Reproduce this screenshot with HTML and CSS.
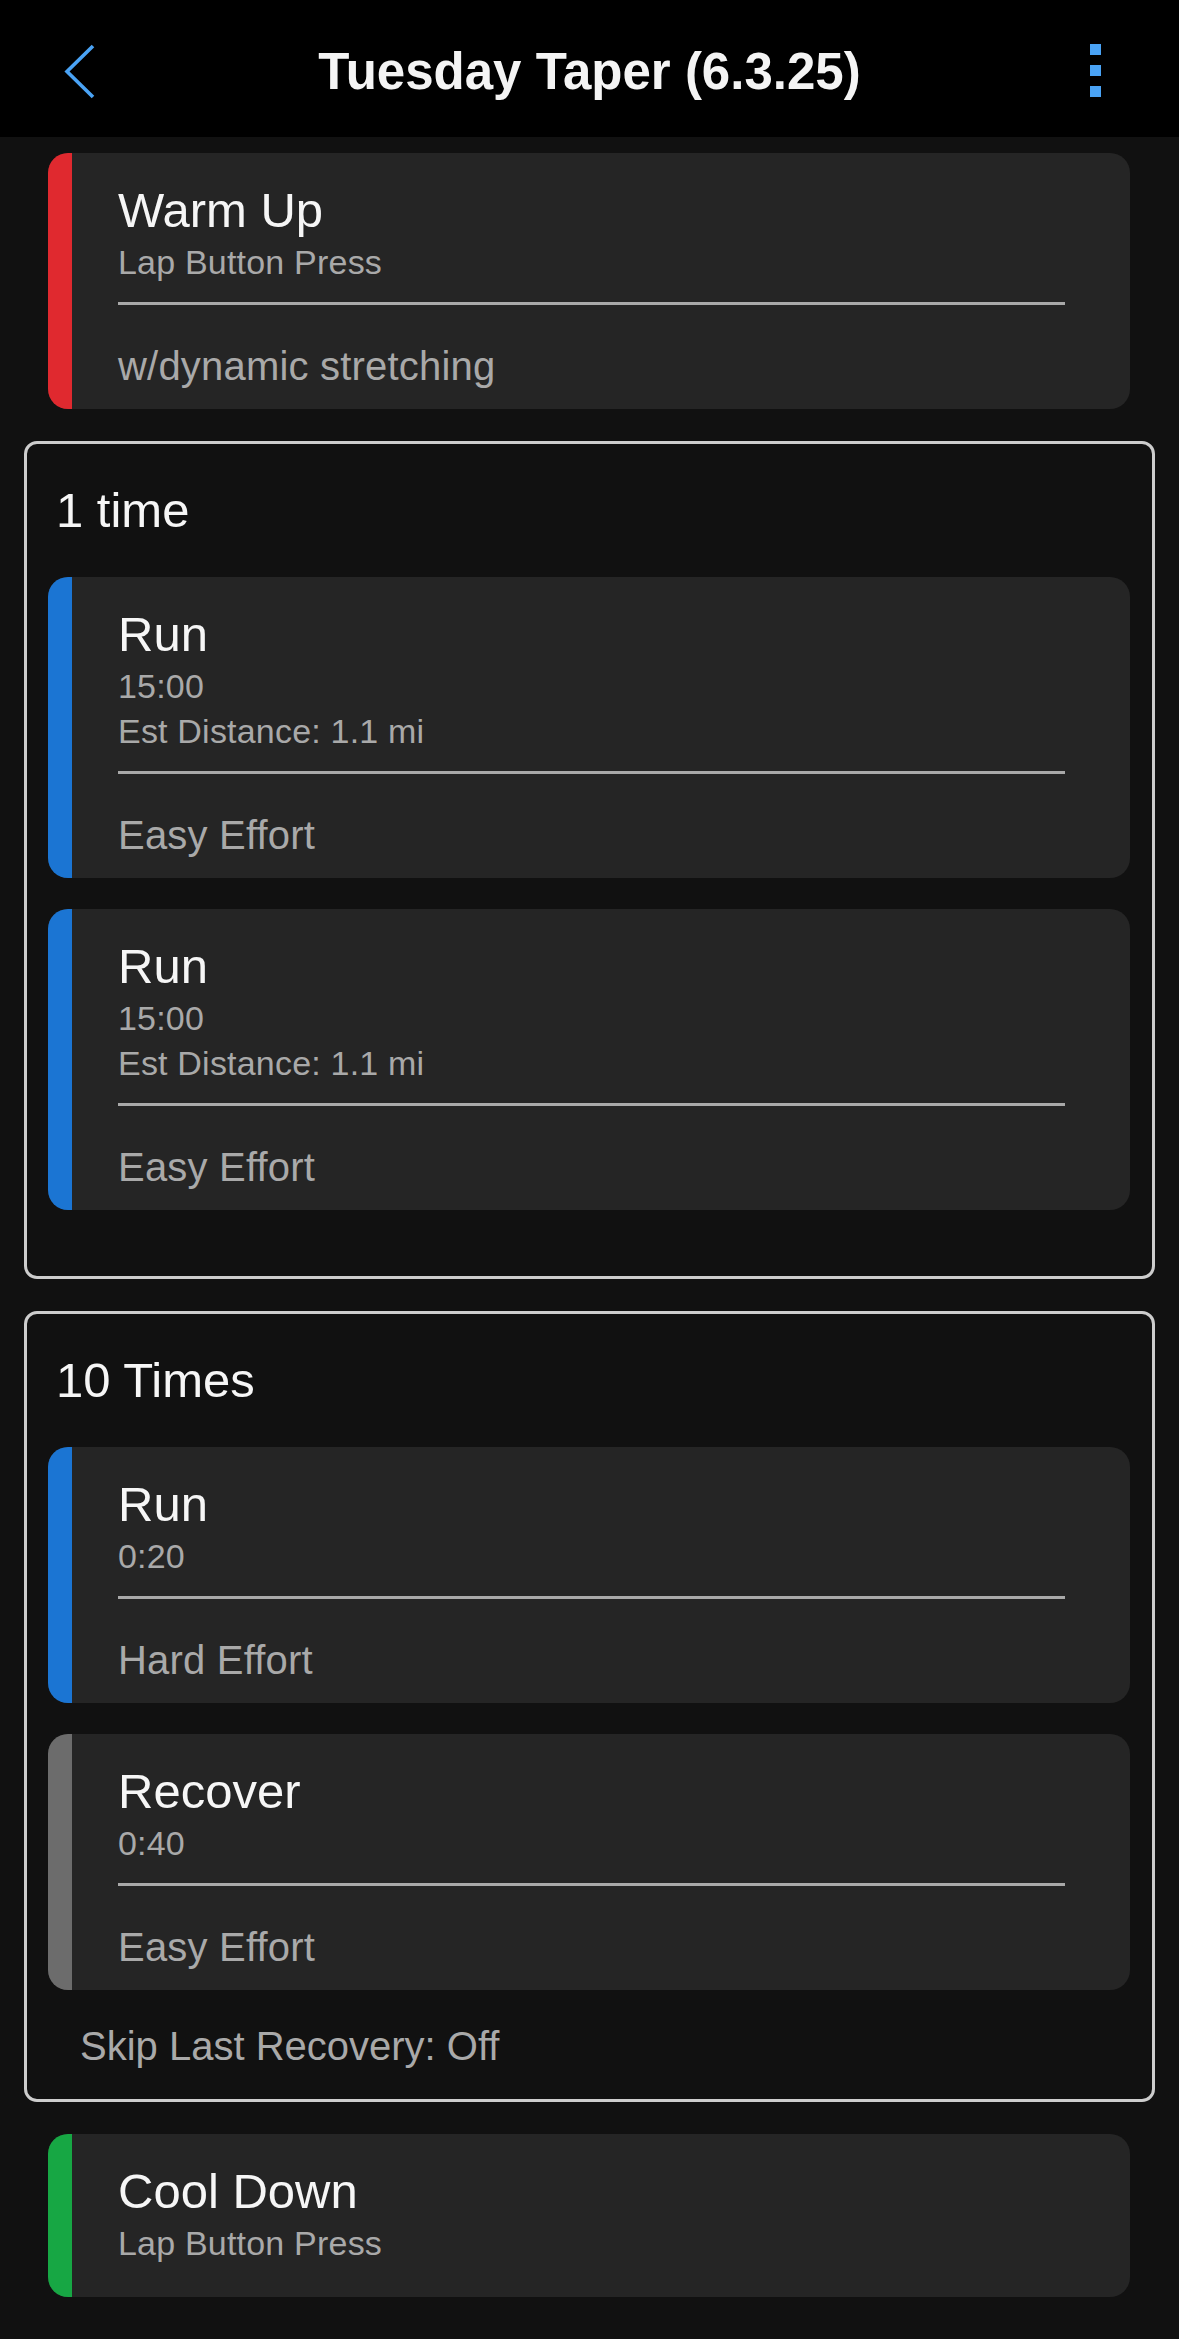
FILE: index.html
```html
<!DOCTYPE html>
<html lang="en">
<head>
<meta charset="utf-8">
<title>Tuesday Taper (6.3.25)</title>
<link rel="stylesheet" href="styles.css">
</head>
<body>
<header class="topbar">
  <div class="side side-left">
    <svg class="back" width="48" height="60" viewBox="0 0 48 60" aria-hidden="true">
      <path d="M33 4 L7 29.5 L33 55" fill="none" stroke="#4aa3f5" stroke-width="3.6" stroke-linejoin="miter"/>
    </svg>
  </div>
  <h1 class="title">Tuesday Taper (6.3.25)</h1>
  <div class="side side-right">
    <div class="kebab"><span></span><span></span><span></span></div>
  </div>
</header>

<main class="list">
  <section class="step step-solo">
    <div class="bar bar-red"></div>
    <div class="step-body">
      <div class="step-title">Warm Up</div>
      <div class="step-sub">Lap Button Press</div>
      <div class="divider"></div>
      <div class="step-note">w/dynamic stretching</div>
    </div>
  </section>

  <section class="group group-first">
    <div class="group-head">1 time</div>
    <div class="group-steps">
      <div class="step">
        <div class="bar bar-blue"></div>
        <div class="step-body">
          <div class="step-title">Run</div>
          <div class="step-sub">15:00</div>
          <div class="step-sub">Est Distance: 1.1 mi</div>
          <div class="divider"></div>
          <div class="step-note">Easy Effort</div>
        </div>
      </div>
      <div class="step">
        <div class="bar bar-blue"></div>
        <div class="step-body">
          <div class="step-title">Run</div>
          <div class="step-sub">15:00</div>
          <div class="step-sub">Est Distance: 1.1 mi</div>
          <div class="divider"></div>
          <div class="step-note">Easy Effort</div>
        </div>
      </div>
    </div>
  </section>

  <section class="group">
    <div class="group-head">10 Times</div>
    <div class="group-steps">
      <div class="step">
        <div class="bar bar-blue"></div>
        <div class="step-body">
          <div class="step-title">Run</div>
          <div class="step-sub">0:20</div>
          <div class="divider"></div>
          <div class="step-note">Hard Effort</div>
        </div>
      </div>
      <div class="step">
        <div class="bar bar-gray"></div>
        <div class="step-body">
          <div class="step-title">Recover</div>
          <div class="step-sub">0:40</div>
          <div class="divider"></div>
          <div class="step-note">Easy Effort</div>
        </div>
      </div>
    </div>
    <div class="group-foot">Skip Last Recovery: Off</div>
  </section>

  <section class="step step-solo">
    <div class="bar bar-green"></div>
    <div class="step-body step-body-short">
      <div class="step-title">Cool Down</div>
      <div class="step-sub">Lap Button Press</div>
    </div>
  </section>
</main>
</body>
</html>
```

FILE: styles.css
```css
* {
  box-sizing: border-box;
}

html, body {
  margin: 0;
  padding: 0;
  background: #111111;
}

body {
  font-family: "Liberation Sans", Arial, sans-serif;
  color: #f4f4f4;
  min-height: 2339px;
}

.topbar {
  height: 137px;
  background: #000000;
  display: flex;
  align-items: flex-start;
  padding: 42px 60px 0 60px;
}

.side {
  width: 48px;
  height: 60px;
  flex: none;
  display: flex;
}

.side-right {
  justify-content: center;
}

.back {
  display: block;
}

.kebab {
  margin-top: 2px;
  display: flex;
  flex-direction: column;
  gap: 10px;
}

.kebab span {
  display: block;
  width: 11px;
  height: 11px;
  background: #4aa3f5;
}

.title {
  flex: 1;
  margin: 0;
  text-align: center;
  font-size: 51px;
  line-height: 60px;
  font-weight: 700;
  color: #f4f4f4;
}

.list {
  display: flex;
  flex-direction: column;
  gap: 32px;
  padding: 16px 24px 0 24px;
}

.step {
  display: flex;
  background: #252525;
  border-radius: 20px;
  overflow: hidden;
}

.step-solo {
  margin: 0 25px 0 24px;
}

.bar {
  width: 24px;
  flex: none;
}

.bar-red { background: #e0292f; }
.bar-blue { background: #1b75d3; }
.bar-gray { background: #6c6c6c; }
.bar-green { background: #17a744; }

.step-body {
  flex: 1;
  padding: 27px 65px 18px 46px;
}

.step-body-short {
  padding-bottom: 31px;
}

.step-title {
  font-size: 49px;
  line-height: 60px;
  color: #f6f6f6;
}

.step-sub {
  font-size: 34px;
  line-height: 45px;
  color: #a9a9a9;
  letter-spacing: 0.2px;
}

.divider {
  height: 3px;
  background: #a9a9a9;
  margin-top: 17px;
}

.step-note {
  margin-top: 36px;
  font-size: 40px;
  line-height: 50px;
  color: #a9a9a9;
  letter-spacing: 0.2px;
}

.group {
  border: 3px solid #cdcdcd;
  border-radius: 13px;
  padding: 36px 22px 28px 21px;
}

.group-first {
  padding-bottom: 66px;
}

.group-head {
  font-size: 49px;
  line-height: 60px;
  color: #f6f6f6;
  padding-left: 8px;
}

.group-steps {
  margin-top: 37px;
  display: flex;
  flex-direction: column;
  gap: 31px;
}

.group-foot {
  margin-top: 31px;
  padding-left: 32px;
  font-size: 40px;
  line-height: 50px;
  color: #a9a9a9;
}
```
